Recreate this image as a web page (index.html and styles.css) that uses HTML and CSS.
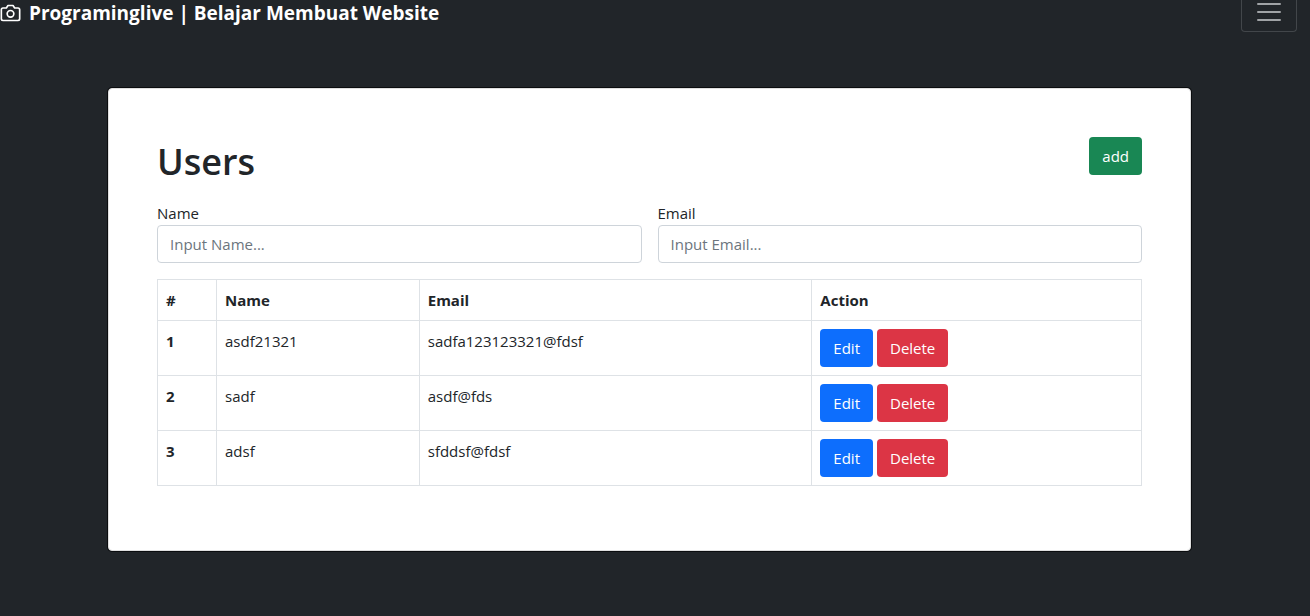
FILE: index.html
```
<!DOCTYPE html>
<html lang="id">
<head>
<meta charset="utf-8">
<meta name="viewport" content="width=device-width, initial-scale=1">
<title>Programinglive | Belajar Membuat Website</title>
<link rel="stylesheet" href="styles.css">
</head>
<body>
<header class="navbar">
  <a class="brand" href="#">
    <svg class="brand-icon" viewBox="0 0 24 24" fill="none" stroke="currentColor" stroke-width="2" stroke-linecap="round" stroke-linejoin="round" aria-hidden="true">
      <path d="M23 19a2 2 0 0 1-2 2H3a2 2 0 0 1-2-2V8a2 2 0 0 1 2-2h4l2-3h6l2 3h4a2 2 0 0 1 2 2z"/>
      <circle cx="12" cy="13" r="4"/>
    </svg>
    <strong>Programinglive | Belajar Membuat Website</strong>
  </a>
  <button class="toggler" type="button" aria-label="Toggle navigation">
    <svg class="toggler-icon" viewBox="0 0 30 30" fill="none" stroke="currentColor" stroke-width="2" stroke-linecap="round" aria-hidden="true">
      <path d="M4 7h22M4 15h22M4 23h22"/>
    </svg>
  </button>
</header>
<main class="page">
  <section class="card">
    <div class="card-head">
      <h1 class="title">Users</h1>
      <button class="btn btn-success" type="button">add</button>
    </div>
    <form class="filters">
      <div class="field">
        <label for="name">Name</label>
        <input class="control" id="name" type="text" placeholder="Input Name...">
      </div>
      <div class="field">
        <label for="email">Email</label>
        <input class="control" id="email" type="text" placeholder="Input Email...">
      </div>
    </form>
    <table class="table">
      <colgroup><col class="col-id"><col class="col-name"><col class="col-email"><col></colgroup>
      <thead>
        <tr><th scope="col">#</th><th scope="col">Name</th><th scope="col">Email</th><th scope="col">Action</th></tr>
      </thead>
      <tbody>
        <tr><th scope="row">1</th><td>asdf21321</td><td>sadfa123123321@fdsf</td><td><div class="actions"><button class="btn btn-primary" type="button">Edit</button><button class="btn btn-danger" type="button">Delete</button></div></td></tr>
        <tr><th scope="row">2</th><td>sadf</td><td>asdf@fds</td><td><div class="actions"><button class="btn btn-primary" type="button">Edit</button><button class="btn btn-danger" type="button">Delete</button></div></td></tr>
        <tr><th scope="row">3</th><td>adsf</td><td>sfddsf@fdsf</td><td><div class="actions"><button class="btn btn-primary" type="button">Edit</button><button class="btn btn-danger" type="button">Delete</button></div></td></tr>
      </tbody>
    </table>
  </section>
</main>
</body>
</html>
```
FILE: styles.css
```
* { box-sizing: border-box; }

body {
  margin: 0;
  min-height: 100vh;
  background: #212529;
  color: #212529;
  font: 400 15px/24px "Segoe UI", "Open Sans", "Noto Sans", sans-serif;
}

.navbar {
  display: flex;
  justify-content: space-between;
  align-items: flex-start;
  height: 40px;
  padding-right: 13px;
}

.brand {
  display: flex;
  align-items: center;
  gap: 8px;
  height: 26px;
  color: #fff;
  font-size: 19px;
  text-decoration: none;
  white-space: nowrap;
}

.brand-icon { width: 21px; height: 20px; }

.toggler {
  display: flex;
  align-items: flex-end;
  justify-content: center;
  width: 56px;
  height: 32px;
  padding: 0 0 4px;
  border: 1px solid #42464a;
  border-top: 0;
  border-radius: 0 0 4px 4px;
  background: transparent;
  color: #a0a3a6;
}

.toggler-icon { width: 30px; height: 30px; }

.page { padding: 48px 119px 64px 108px; }

.card {
  padding: 48px 48px 64px;
  border: 1px solid #dfdfdf;
  border-radius: 4px;
  background: #fff;
  box-shadow: 0 0 0 1px #0b0d0f;
}

.card-head {
  display: flex;
  justify-content: space-between;
  align-items: flex-start;
  margin-bottom: 14px;
}

.title {
  margin: 0;
  font-size: 36px;
  font-weight: 600;
  line-height: 50px;
}

.btn {
  padding: 6px 12px;
  border: 1px solid transparent;
  border-radius: 4px;
  color: #fff;
  font: inherit;
}

.btn-success { background: #198754; }
.btn-primary { background: #0d6efd; }
.btn-danger { background: #dc3545; }

.filters {
  display: grid;
  grid-template-columns: 1fr 1fr;
  gap: 16px;
  margin-bottom: 16px;
}

.field { display: flex; flex-direction: column; }

.control {
  width: 100%;
  height: 38px;
  padding: 6px 12px;
  border: 1px solid #ced4da;
  border-radius: 4px;
  background: #fff;
  color: #212529;
  font: inherit;
}

.control::placeholder { color: #6c757d; opacity: 1; }

.table {
  width: 100%;
  border-collapse: collapse;
  table-layout: fixed;
}

.table th,
.table td {
  padding: 8px;
  border: 1px solid #dee2e6;
  text-align: left;
  vertical-align: top;
}

.col-id { width: 6%; }
.col-name { width: 20.6%; }
.col-email { width: 39.9%; }

.actions { display: flex; gap: 4px; }
```
